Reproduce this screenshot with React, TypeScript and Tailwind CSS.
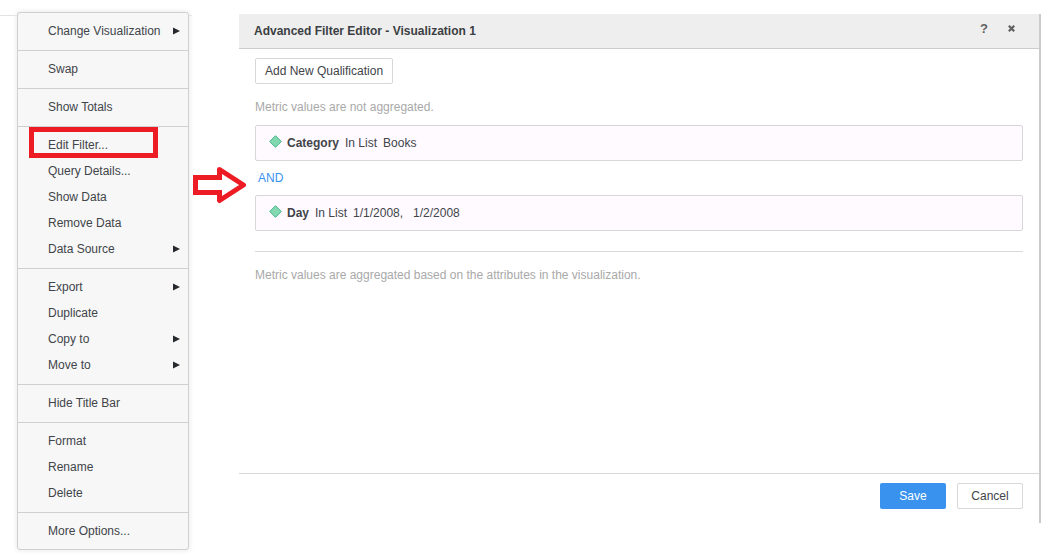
type MenuItem = { label: string; submenu?: boolean; highlighted?: boolean };

const sections: MenuItem[][] = [
  [{ label: "Change Visualization", submenu: true }],
  [{ label: "Swap" }],
  [{ label: "Show Totals" }],
  [
    { label: "Edit Filter...", highlighted: true },
    { label: "Query Details..." },
    { label: "Show Data" },
    { label: "Remove Data" },
    { label: "Data Source", submenu: true },
  ],
  [
    { label: "Export", submenu: true },
    { label: "Duplicate" },
    { label: "Copy to", submenu: true },
    { label: "Move to", submenu: true },
  ],
  [{ label: "Hide Title Bar" }],
  [{ label: "Format" }, { label: "Rename" }, { label: "Delete" }],
  [{ label: "More Options..." }],
];

function MenuRow({ item }: { item: MenuItem }) {
  return (
    <li className="relative">
      <button
        type="button"
        className="flex h-[26px] w-full items-center justify-between pr-2 pl-[30px] text-left whitespace-nowrap"
      >
        {item.label}
        {item.submenu && (
          <svg width="7" height="8" viewBox="0 0 7 8" aria-hidden="true">
            <path d="M0 0.5 L7 4 L0 7.5 Z" fill="#26292d" />
          </svg>
        )}
      </button>
      {item.highlighted && (
        <span className="pointer-events-none absolute -top-[5px] left-[11px] h-[31px] w-[129px] border-[5px] border-[#ed1c24]" />
      )}
    </li>
  );
}

function ContextMenu() {
  return (
    <nav className="relative mt-3 mb-[5px] ml-[17px] w-[172px] shrink-0 self-start rounded-[3px] border border-[#d0d0d2] bg-[#f7f7f7] shadow-[0_0_4px_1px_#efecef]">
      {sections.map((items) => (
        <ul
          key={items[0].label}
          className="border-b border-[#d0d0d2] pt-[5px] pb-[6px] last:border-b-0 last:pb-[5px]"
        >
          {items.map((item) => (
            <MenuRow key={item.label} item={item} />
          ))}
        </ul>
      ))}
    </nav>
  );
}

function Qualification({ name, values }: { name: string; values: string[] }) {
  return (
    <div className="flex h-9 items-center rounded-[2px] border border-[#d8d6d9] bg-[#fefaff] pl-[13px]">
      <svg width="13" height="13" viewBox="0 0 13 13" className="mr-[5px] mb-[3px]" aria-hidden="true">
        <path d="M6.5 0.7 L12.3 6.5 L6.5 12.3 L0.7 6.5 Z" fill="#82d9b1" stroke="#45b28a" />
      </svg>
      <b className="mr-[6px]">{name}</b>
      <span className="mr-[6px]">In List</span>
      <span className="flex gap-[10px]">
        {values.map((value, i) => (
          <span key={value}>{i < values.length - 1 ? value + "," : value}</span>
        ))}
      </span>
    </div>
  );
}

function FilterEditor() {
  return (
    <section
      aria-labelledby="editor-title"
      className="mt-[14px] mr-4 mb-8 ml-[50px] flex min-w-0 flex-1 flex-col border-r-2 border-[#cbcbcb] bg-white"
    >
      <header className="flex h-[35px] items-center border-b border-[#cccccc] bg-[#eeeeee] pr-6 pl-[15px] text-[#3b3e43]">
        <h1 id="editor-title" className="flex-1 font-bold">
          Advanced Filter Editor - Visualization 1
        </h1>
        <div className="mb-[5px] flex items-center gap-5 text-[#606060]">
          <button type="button" aria-label="Help" className="text-[13px] font-bold">
            ?
          </button>
          <button type="button" aria-label="Close">
            <svg width="7" height="7" viewBox="0 0 7 7" aria-hidden="true">
              <path d="M0.8 0.8 L6.2 6.2 M6.2 0.8 L0.8 6.2" stroke="#606060" strokeWidth="2.2" />
            </svg>
          </button>
        </div>
      </header>

      <div className="flex-1 px-4 pt-[9px]">
        <button type="button" className="h-[26px] rounded-[2px] border border-[#d8d6d9] px-[9px]">
          Add New Qualification
        </button>
        <p className="mt-[15px] mb-[10px] text-[#a9a9a9]">Metric values are not aggregated.</p>
        <Qualification name="Category" values={["Books"]} />
        <button type="button" className="my-[9px] ml-[3px] block text-[#3992ee]">
          AND
        </button>
        <Qualification name="Day" values={["1/1/2008", "1/2/2008"]} />
        <hr className="mt-5 border-[#d8d8d8]" />
        <p className="mt-[15px] text-[#a9a9a9]">
          Metric values are aggregated based on the attributes in the visualization.
        </p>
      </div>

      <footer className="flex justify-end gap-[11px] border-t border-[#d8d8d8] pt-[9px] pr-4 pb-[14px]">
        <button type="button" className="h-[26px] w-[66px] rounded-[2px] bg-[#3992ee] text-white">
          Save
        </button>
        <button type="button" className="h-[26px] w-[66px] rounded-[2px] border border-[#d8d8d8]">
          Cancel
        </button>
      </footer>
    </section>
  );
}

export default function App() {
  return (
    <main className="relative flex min-h-screen bg-white font-['Liberation_Sans',Arial,sans-serif] text-[12px] leading-4 text-[#414449]">
      <div className="absolute top-[15px] left-0 w-48 border-t border-[#e4e2e4]" />
      <ContextMenu />
      <FilterEditor />
      <svg
        width="54"
        height="37"
        viewBox="0 0 54 37"
        className="pointer-events-none absolute top-[167px] left-[193px]"
        aria-hidden="true"
      >
        <path d="M2.5 10.5 H26.5 V2.5 L50.5 18 L26.5 33.5 V25.5 H2.5 Z" fill="#ffffff" />
        <path
          d="M26.5 10.5 V2.5 L50.5 18 L26.5 33.5 V25.5"
          fill="none"
          stroke="#ed1c24"
          strokeWidth="5"
          strokeLinejoin="round"
        />
        <path d="M29 10.5 H2.5 V25.5 H29" fill="none" stroke="#ed1c24" strokeWidth="5" />
      </svg>
    </main>
  );
}
